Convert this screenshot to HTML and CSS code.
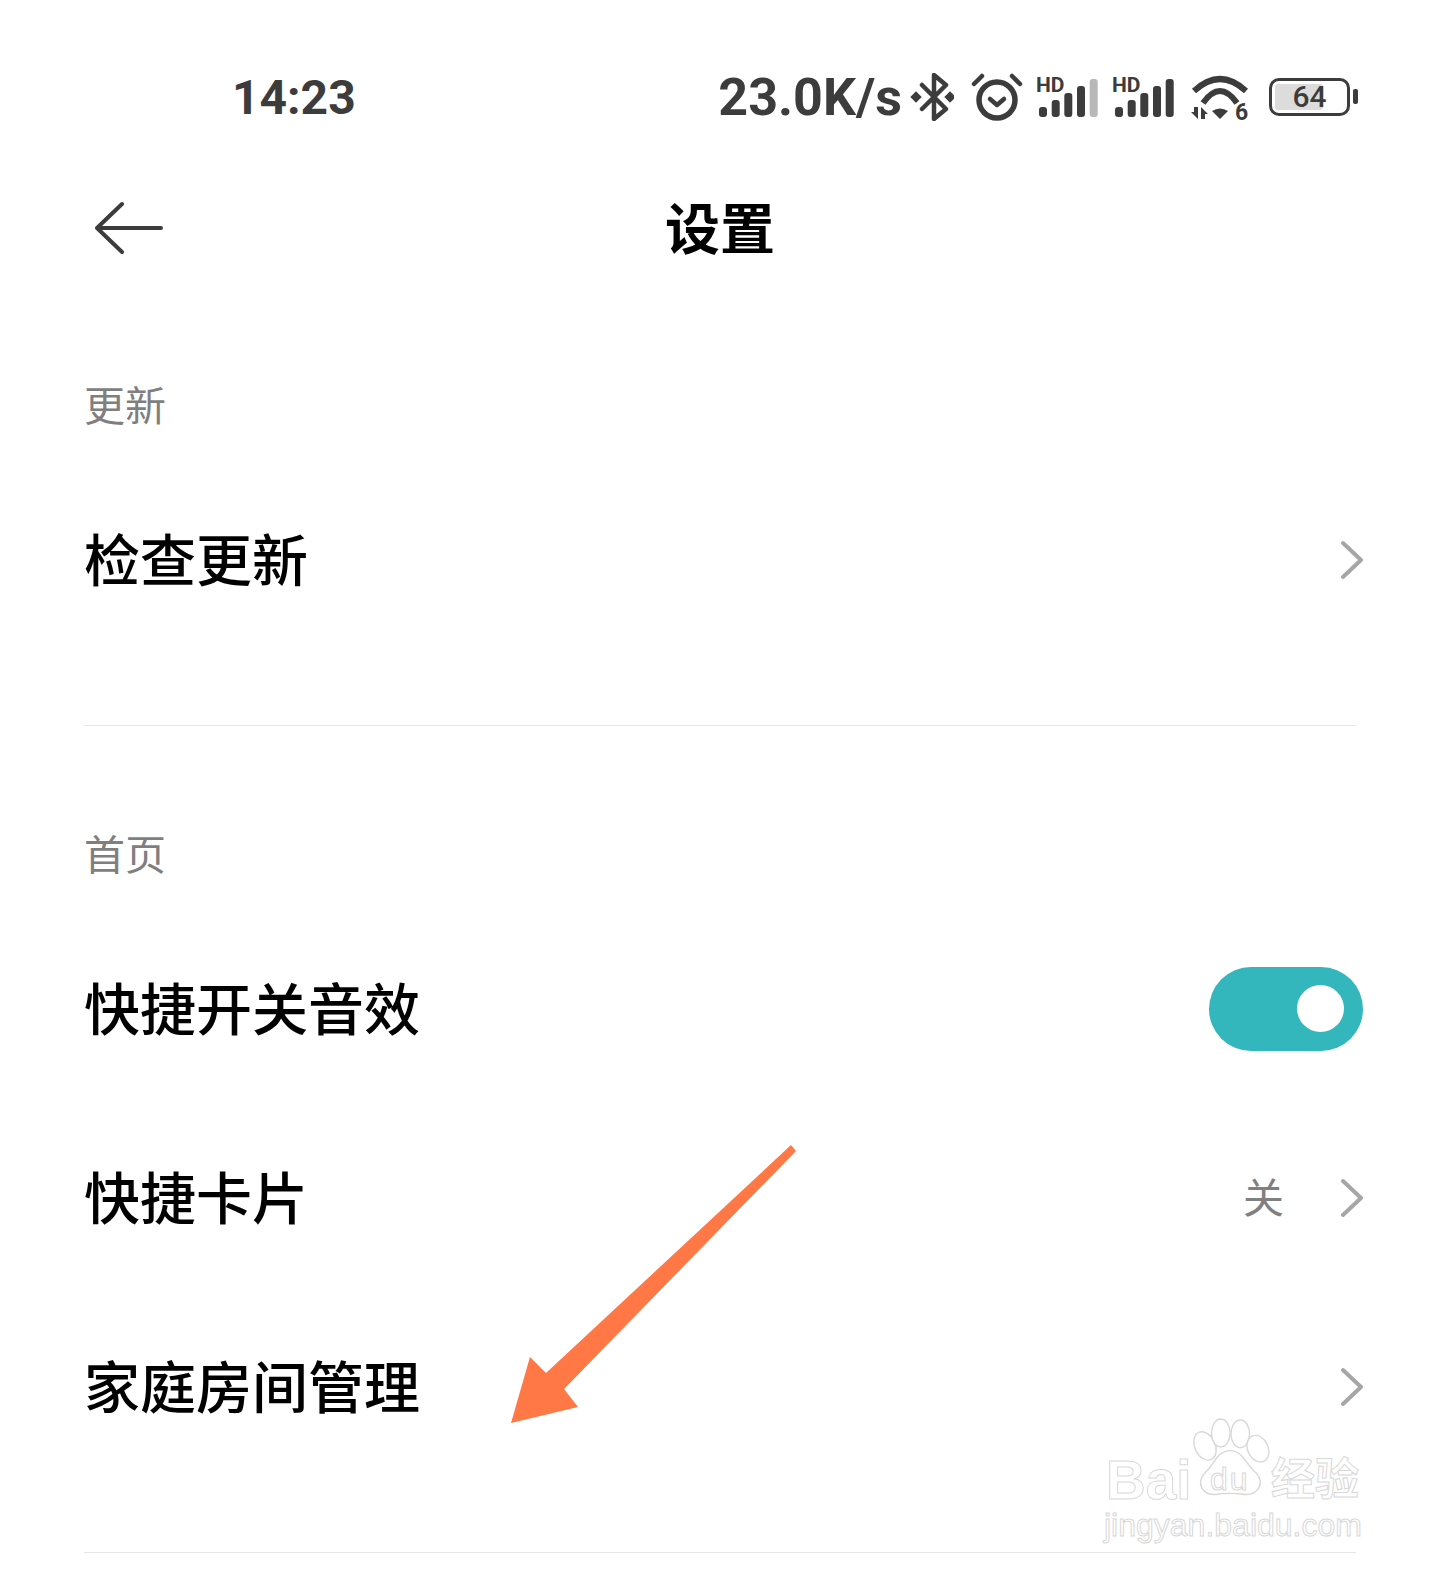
FILE: index.html
```html
<!DOCTYPE html>
<html lang="zh-CN">
<head>
  <meta charset="UTF-8">
  <title>设置</title>
  <link rel="stylesheet" href="styles.css">
</head>
<body>
  <div class="screen">
    <!-- 状态栏 -->
    <div class="status-bar">
      <div class="clock">14:23</div>
      <div class="speed">23.0K/s</div>
      <div class="status-icons">
        <svg class="ic-bt" viewBox="0 0 46 48">
          <path class="line" d="M14 12L38 36L26 46V2L38 12L14 36"/>
          <rect class="solid" x="4" y="20" width="8" height="8" transform="rotate(45 8 24)"/>
          <rect class="solid" x="38" y="20" width="8" height="8" transform="rotate(45 42 24)"/>
        </svg>
        <svg class="ic-alarm" viewBox="0 0 58 48">
          <circle class="line thick" cx="31" cy="27" r="18"/>
          <path class="line" d="M8 11L16 3M46 3L54 11"/>
          <path class="line" d="M24 26L31 32L38 26"/>
        </svg>
        <svg class="ic-signal" viewBox="0 -6 64 54">
          <text class="hd" x="0" y="16">HD</text>
          <rect class="solid" x="3" y="31" width="8" height="10" rx="3"/>
          <rect class="solid" x="15.7" y="24" width="8" height="17" rx="3"/>
          <rect class="solid" x="28.3" y="17" width="8" height="24" rx="3"/>
          <rect class="solid" x="41" y="10" width="8" height="31" rx="3"/>
          <rect class="dim" x="53.7" y="3" width="8" height="38" rx="3"/>
        </svg>
        <svg class="ic-signal" viewBox="0 -6 64 54">
          <text class="hd" x="0" y="16">HD</text>
          <rect class="solid" x="3" y="31" width="8" height="10" rx="3"/>
          <rect class="solid" x="15.7" y="24" width="8" height="17" rx="3"/>
          <rect class="solid" x="28.3" y="17" width="8" height="24" rx="3"/>
          <rect class="solid" x="41" y="10" width="8" height="31" rx="3"/>
          <rect class="solid" x="53.7" y="3" width="8" height="38" rx="3"/>
        </svg>
        <svg class="ic-wifi" viewBox="0 -8 64 62">
          <path class="band" d="M6 17Q32 -7 58 17"/>
          <path class="band" d="M15 29Q32 5 49 29"/>
          <path class="solid" d="M24 37Q32 32 40 37L32 45Z"/>
          <path class="solid" d="M6 33H10V45L3 38H6Z"/>
          <path class="solid" d="M13 45V33L20 40H17V45Z"/>
          <text class="wifi-num" x="47" y="46">6</text>
        </svg>
        <div class="battery">
          <div class="battery-level"></div>
          <div class="battery-num">64</div>
          <div class="battery-nub"></div>
        </div>
      </div>
    </div>

    <!-- 标题栏 -->
    <div class="header">
      <svg class="back" viewBox="0 0 68 56">
        <path d="M27 4L2 28L27 52M2 28H66"/>
      </svg>
      <div class="page-title">设置</div>
    </div>

    <div class="section first">
      <div class="section-label">更新</div>
      <div class="row">
        <div class="row-title">检查更新</div>
        <svg class="chevron" viewBox="0 0 24 40"><path d="M4 3L22 20L4 37"/></svg>
      </div>
    </div>
    <div class="divider"></div>

    <div class="section">
      <div class="section-label">首页</div>
      <div class="row">
        <div class="row-title">快捷开关音效</div>
        <div class="toggle"><div class="knob"></div></div>
      </div>
      <div class="row">
        <div class="row-title">快捷卡片</div>
        <div class="row-value">关</div>
        <svg class="chevron" viewBox="0 0 24 40"><path d="M4 3L22 20L4 37"/></svg>
      </div>
      <div class="row">
        <div class="row-title">家庭房间管理</div>
        <svg class="chevron" viewBox="0 0 24 40"><path d="M4 3L22 20L4 37"/></svg>
      </div>
    </div>
    <div class="divider"></div>

    <!-- 橙色箭头 -->
    <svg class="arrow" viewBox="0 0 320 300">
      <polygon points="21,293 40,227 56,243 301,15 306,21 74,259 88,277"/>
    </svg>

    <!-- 水印 -->
    <div class="watermark">
      <div class="wm-top">
        <span class="wm-bai">Bai</span>
        <svg class="wm-paw" viewBox="0 0 84 86">
          <ellipse cx="14" cy="30" rx="11" ry="16" transform="rotate(-25 14 30)"/>
          <ellipse cx="31" cy="16" rx="10" ry="15"/>
          <ellipse cx="52" cy="17" rx="10" ry="15"/>
          <ellipse cx="71" cy="33" rx="11" ry="15" transform="rotate(-25 71 33)"/>
          <path d="M41 35C55 35 58 50 69 59C79 70 71 84 55 82C47 81 35 81 27 82C11 84 4 70 14 59C24 50 27 35 41 35Z"/>
        </svg>
        <span class="wm-du">du</span>
        <span class="wm-cn">经验</span>
      </div>
      <div class="wm-url">jingyan.baidu.com</div>
    </div>
  </div>
</body>
</html>
```
FILE: styles.css
```css
html, body {
  margin: 0;
  background: #fff;
}

.screen {
  position: relative;
  width: 1440px;
  height: 1571px;
  overflow: hidden;
  font-family: "Noto Sans CJK SC", "Noto Sans", sans-serif;
  color: #000;
}

/* 状态栏 */
.status-bar {
  height: 194px;
  display: flex;
  align-items: center;
  padding: 0 83px 0 232px;
  color: #3c3c3c;
  font-family: Roboto, "Noto Sans", sans-serif;
  font-weight: 700;
}

.clock {
  font-size: 48px;
  margin-right: auto;
}

.speed {
  font-size: 52px;
  margin-right: 6px;
}

.status-icons {
  display: flex;
  align-items: center;
  gap: 12px;
}

.status-icons svg {
  display: block;
}

.line {
  fill: none;
  stroke: #3c3c3c;
  stroke-width: 4.5;
  stroke-linecap: round;
  stroke-linejoin: round;
}

.thick {
  stroke-width: 5.5;
}

.band {
  fill: none;
  stroke: #3c3c3c;
  stroke-width: 6;
}

.solid {
  fill: #3c3c3c;
}

.dim {
  fill: #b8b8b8;
}

.hd {
  font-size: 21px;
  font-weight: 700;
  fill: #3c3c3c;
}

.wifi-num {
  font-size: 23px;
  font-weight: 700;
  fill: #3c3c3c;
}

.ic-bt {
  width: 46px;
  height: 48px;
}

.ic-alarm {
  width: 58px;
  height: 48px;
}

.ic-signal {
  width: 64px;
  height: 54px;
}

.ic-wifi {
  width: 64px;
  height: 62px;
}

.battery {
  position: relative;
  box-sizing: border-box;
  width: 81px;
  height: 38px;
  margin-left: 5px;
  margin-right: 7px;
  border: 3.5px solid #3c3c3c;
  border-radius: 10px;
  display: flex;
  align-items: center;
  justify-content: center;
}

.battery-level {
  position: absolute;
  left: 3px;
  top: 3px;
  bottom: 3px;
  width: 48px;
  border-radius: 3px;
  background: #dcdcdc;
}

.battery-num {
  position: relative;
  font-size: 30px;
  font-weight: 500;
  line-height: 1;
}

.battery-nub {
  position: absolute;
  right: -11px;
  top: 8px;
  width: 5px;
  height: 15px;
  border-radius: 2px;
  background: #3c3c3c;
}

/* 标题栏 */
.header {
  height: 68px;
  padding: 0 95px;
  display: grid;
  grid-template-columns: 1fr auto 1fr;
  align-items: center;
}

.back {
  width: 68px;
  height: 56px;
}

.back path {
  fill: none;
  stroke: #3c3c3c;
  stroke-width: 4;
  stroke-linecap: round;
  stroke-linejoin: round;
}

.page-title {
  font-size: 55px;
  font-weight: 700;
  line-height: 62px;
  margin-bottom: 6px;
}

/* 列表 */
.section {
  padding: 96px 77px 71px 84px;
}

.section.first {
  padding-top: 111px;
}

.section-label {
  font-size: 41px;
  line-height: 60px;
  color: #7f7f7f;
  margin-bottom: 32px;
}

.row {
  height: 189px;
  display: flex;
  align-items: center;
}

.row-title {
  font-size: 56px;
  font-weight: 500;
  margin-bottom: 6px;
  margin-right: auto;
}

.row-value {
  font-size: 41px;
  color: #808080;
  margin-bottom: 6px;
  margin-right: 55px;
}

.chevron {
  width: 24px;
  height: 40px;
}

.chevron path {
  fill: none;
  stroke: #a6a6a6;
  stroke-width: 4;
  stroke-linecap: round;
  stroke-linejoin: round;
}

.toggle {
  width: 154px;
  height: 84px;
  border-radius: 42px;
  background: #33b7bd;
  display: flex;
  align-items: center;
  justify-content: flex-end;
  padding-right: 19px;
  box-sizing: border-box;
}

.knob {
  width: 47px;
  height: 47px;
  border-radius: 50%;
  background: #fff;
}

.divider {
  height: 1px;
  margin: 0 84px;
  background: #e6e6e6;
}

/* 箭头 */
.arrow {
  position: absolute;
  left: 490px;
  top: 1130px;
  width: 320px;
  height: 300px;
}

.arrow polygon {
  fill: #ff7845;
}

/* 水印 */
.watermark {
  position: absolute;
  left: 1104px;
  top: 1412px;
  width: 262px;
  font-family: "Liberation Sans", sans-serif;
  color: transparent;
  -webkit-text-stroke: 1px #d8d8d8;
}

.wm-top {
  position: relative;
  height: 90px;
}

.wm-bai {
  position: absolute;
  left: 2px;
  top: 38px;
  font-size: 55px;
  font-weight: 700;
  line-height: 60px;
}

.wm-paw {
  position: absolute;
  left: 88px;
  top: 4px;
  width: 78px;
  height: 84px;
}

.wm-paw ellipse, .wm-paw path {
  fill: #fff;
  stroke: #d8d8d8;
  stroke-width: 1.5;
}

.wm-du {
  position: absolute;
  left: 106px;
  top: 47px;
  font-size: 32px;
  letter-spacing: 2px;
  line-height: 40px;
}

.wm-cn {
  position: absolute;
  left: 167px;
  top: 34px;
  font-family: "Noto Sans CJK SC", sans-serif;
  font-size: 44px;
  font-weight: 700;
  line-height: 60px;
}

.wm-url {
  margin-top: 4px;
  font-size: 32px;
  line-height: 38px;
  white-space: nowrap;
}
```
